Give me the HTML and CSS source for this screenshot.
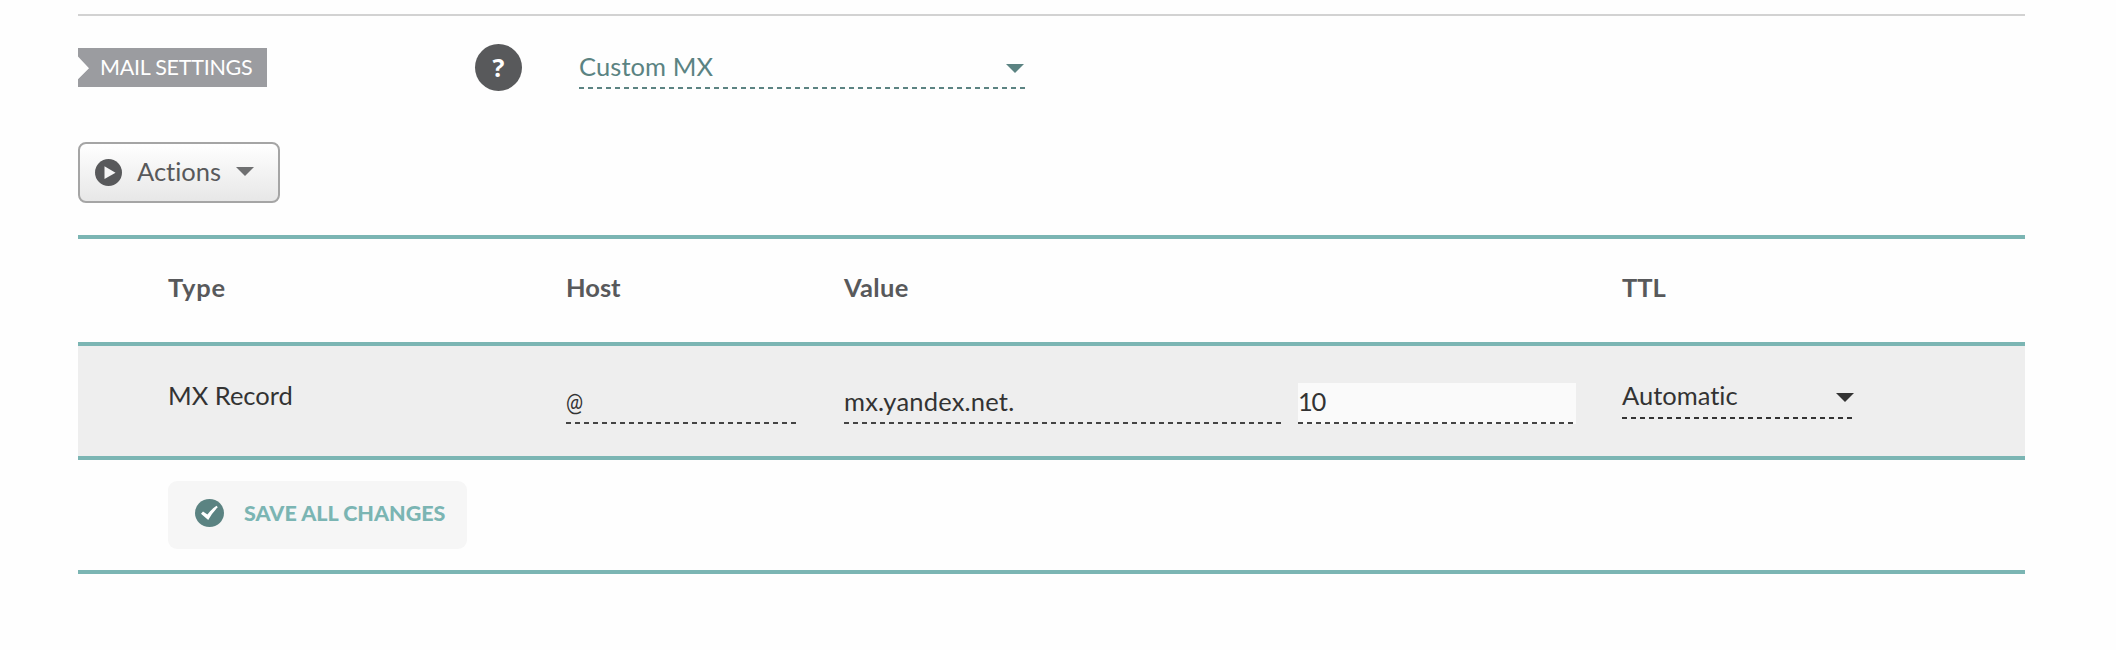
FILE: index.html
```html
<!DOCTYPE html>
<html lang="en">
<head>
<meta charset="utf-8">
<title>Mail Settings</title>
<link rel="stylesheet" href="styles.css">
</head>
<body>
<main class="panel">
  <section class="settings">
    <h2 class="tag"><span class="t-tag">MAIL SETTINGS</span></h2>
    <span class="help"><span>?</span></span>
    <div class="select select-mail"><span class="t-custom">Custom MX</span><svg class="caret" viewBox="0 0 18 9"><path d="M0 0H18L9 9Z"/></svg></div>
  </section>
  <button class="actions">
    <svg class="play" viewBox="0 0 27 27"><circle cx="13.5" cy="13.5" r="13.5"/><path d="M9.5 7.3V20L20.5 13.7Z" fill="#f6f6f6"/></svg>
    <span class="t-actions">Actions</span>
    <svg class="caret" viewBox="0 0 18 9"><path d="M0 0H18L9 9Z"/></svg>
  </button>
  <section class="records">
    <div class="row head">
      <span class="c-type t-type">Type</span><span class="c-host t-host">Host</span><span class="c-value t-value">Value</span><span class="c-ttl t-ttl">TTL</span>
    </div>
    <div class="row record">
      <span class="c-type t-record">MX Record</span>
      <div class="c-host field"><span class="t-at">@</span></div>
      <div class="c-value field"><span class="t-mx">mx.yandex.net.</span></div>
      <div class="c-prio field"><span class="t-ten">10</span></div>
      <div class="c-ttl select"><span class="t-auto">Automatic</span><svg class="caret" viewBox="0 0 18 9"><path d="M0 0H18L9 9Z"/></svg></div>
    </div>
    <div class="foot">
      <button class="save">
        <svg class="check" viewBox="0 0 29 28"><ellipse cx="14.5" cy="14" rx="14.5" ry="14"/><path d="M6 14.8 8 12.6 12.4 15.6Q16 10.5 21.5 6.8L22.8 8.2Q17.5 13.5 13.2 21Z" fill="#fff"/></svg>
        <span class="t-save">SAVE ALL CHANGES</span>
      </button>
    </div>
  </section>
</main>
</body>
</html>
```
FILE: styles.css
```css
* { box-sizing: border-box; }
body {
  margin: 0;
  background: #fefefe;
  color: #333;
  font: 25.5px/30px Lato, "Open Sans", sans-serif;
  font-variant-ligatures: none;
}
span { white-space: nowrap; }
button { font: inherit; font-variant-ligatures: none; display: flex; border: 0; }
.panel { width: 1947px; margin-left: 78px; padding-top: 14px; }
.settings {
  display: flex;
  height: 128px;
  border-top: 2px solid #d2d2d2;
}
.tag {
  width: 189px;
  height: 39px;
  margin: 32px 208px 0 0;
  padding: 4px 0 0 22px;
  background: #9b9ca0;
  color: #fff;
  font-size: 21.5px;
  font-weight: 400;
  letter-spacing: -.25px;
  clip-path: polygon(0 0, 100% 0, 100% 100%, 0 100%, 0 80%, 11px 52%, 0 22%);
}
.help {
  width: 47px;
  height: 47px;
  margin: 28px 57px 0 0;
  padding-top: 8px;
  border-radius: 50%;
  background: #58595b;
  color: #fff;
  font: 700 25px/30px "Open Sans", sans-serif;
  text-align: center;
}
.caret { width: 18px; height: 9px; fill: currentColor; flex: none; }
.select {
  display: flex;
  justify-content: space-between;
  background: repeating-linear-gradient(90deg, currentColor 0 5px, transparent 5px 9px) left bottom / 100% 2px no-repeat;
}
.select-mail {
  width: 446px;
  height: 38px;
  margin-top: 35px;
  padding-right: 1px;
  color: #5b8382;
}
.select-mail .caret { margin-top: 13px; }
.t-custom { letter-spacing: .1px; }
.actions {
  width: 202px;
  height: 61px;
  padding: 15px 0 0 15px;
  border: 2px solid #a5a5a5;
  border-radius: 8px;
  background: linear-gradient(#fff, #e7e7e7);
  color: #58595b;
  text-align: left;
}
.play { width: 27px; height: 27px; fill: #58595b; flex: none; }
.t-actions { width: 84px; margin: -3px 15px 0 15px; }
.actions .caret { margin-top: 8px; opacity: .85; }
.records { margin-top: 32px; }
.records, .head, .record, .foot {
  border: 0 solid #7bb5b3;
}
.records { border-top-width: 4px; }
.head, .record, .foot { border-bottom-width: 4px; }
.row {
  display: grid;
  grid-template-columns: 90px 398px 278px 454px 324px 1fr;
}
.c-type { grid-column: 2; }
.c-host { grid-column: 3; }
.c-value { grid-column: 4; }
.c-prio { grid-column: 5; }
.c-ttl { grid-column: 6; }
.head {
  height: 107px;
  padding-top: 33px;
  color: #58595b;
  font-weight: 700;
}
.t-type { letter-spacing: .8px; }
.t-value { letter-spacing: .3px; }
.record {
  height: 114px;
  padding-top: 34px;
  background: #eee;
}
.field {
  height: 44px;
  padding-top: 6px;
  background: repeating-linear-gradient(90deg, #444 0 5px, transparent 5px 9px) left bottom / 100% 2px no-repeat;
}
.t-at { display: inline-block; transform: scaleX(.8); transform-origin: left; }
.t-mx { letter-spacing: .2px; }
.t-ten { letter-spacing: -1.2px; }
.c-host.field { width: 232px; }
.c-value.field { width: 441px; }
.c-prio.field { width: 278px; background-color: #fafafa; margin-top: 3px; height: 41px; padding-top: 3px; }
.record .c-ttl { width: 232px; height: 39px; }
.record .caret { margin-top: 13px; }
.foot { height: 114px; padding: 21px 0 0 90px; }
.save {
  width: 299px;
  height: 68px;
  padding: 17px 0 0 27px;
  border-radius: 9px;
  background: #f6f6f6;
  color: #7bb5b3;
  font-size: 21.5px;
  font-weight: 900;
}
.check { width: 29px; height: 28px; margin: 1px 20px 0 0; fill: #5b8382; flex: none; }
```
